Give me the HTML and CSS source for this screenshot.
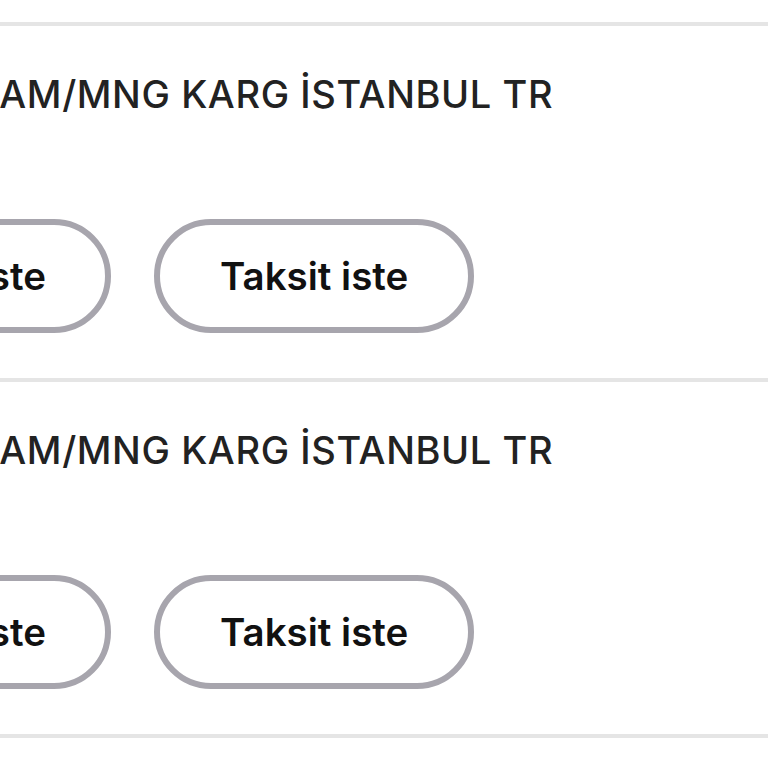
FILE: index.html
```html
<!DOCTYPE html>
<html lang="tr">
<head>
  <meta charset="UTF-8" />
  <meta name="viewport" content="width=device-width, initial-scale=1.0"/>
  <title>Hesap Hareketleri</title>
  <link rel="stylesheet" href="styles.css">
</head>
<body>

  <div class="hareket-list">
    <div class="hareket-item">
      <div class="hareket-title">PAZARAM/MNG KARG İSTANBUL TR</div>
      <div class="hareket-actions">
        <button class="hareket-btn">İade iste</button>
        <button class="hareket-btn">Taksit iste</button>
      </div>
    </div>
    <div class="hareket-item">
      <div class="hareket-title">PAZARAM/MNG KARG İSTANBUL TR</div>
      <div class="hareket-actions">
        <button class="hareket-btn">İade iste</button>
        <button class="hareket-btn">Taksit iste</button>
      </div>
    </div>
  </div>

</body>
</html>
```

FILE: styles.css
```css
* {
  box-sizing: border-box;
}

body {
  margin: 0;
  background: #fff;
  font-family: Inter, "Noto Sans", sans-serif;
  font-feature-settings: "cv11";
  overflow: hidden;
}

.hareket-list {
  padding-top: 22px;
}

.hareket-item {
  border-top: 4px solid #e5e5e5;
  padding: 46px 0 45px;
}

.hareket-item:last-child {
  border-bottom: 4px solid #e5e5e5;
}

.hareket-title {
  margin-left: -128px;
  font-size: 38px;
  line-height: 44px;
  font-weight: 500;
  letter-spacing: 0.6px;
  color: #222;
  white-space: nowrap;
}

.hareket-actions {
  display: flex;
  gap: 43px;
  margin-top: 103px;
  margin-left: -176px;
}

.hareket-btn {
  height: 114px;
  padding: 0 59.5px;
  background: #fff;
  border: 6px solid #a7a5ad;
  border-radius: 57px;
  font-family: inherit;
  font-size: 38.5px;
  font-weight: 600;
  color: #111;
  white-space: nowrap;
  cursor: pointer;
}
```
